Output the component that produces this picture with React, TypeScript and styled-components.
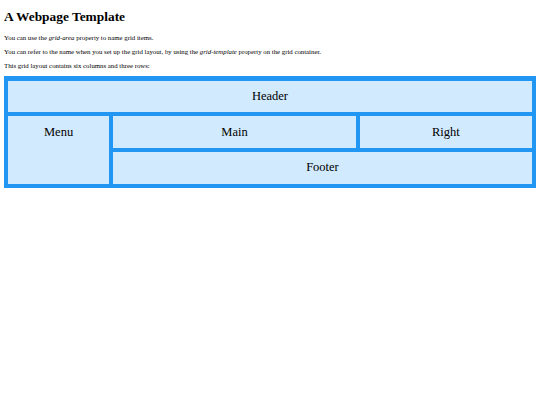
import React from "react";
import styled, { createGlobalStyle } from "styled-components";

const GlobalStyle = createGlobalStyle`
  html, body { background: #ffffff; }
  body {
    margin: 4px;
    font-family: "Liberation Serif", "Times New Roman", serif;
    color: #000000;
  }
`;

const Title = styled.h1`
  font-family: "Liberation Serif", "Times New Roman", serif;
  font-size: 13.4px;
  font-weight: bold;
  margin: 5.3px 0 8.7px;
`;

const Para = styled.p`
  font-family: "Liberation Serif", "Times New Roman", serif;
  font-size: 6.8px;
  margin: 6.8px 0;
`;

const Grid = styled.div`
  display: grid;
  grid-template-areas:
    "header header header header header header"
    "menu main main main right right"
    "menu footer footer footer footer footer";
  grid-template-columns: 101fr 78.3fr 78.3fr 78.3fr 84fr 84fr;
  gap: 4.2px;
  padding: 4.2px;
  background-color: #2196f3;
  margin-top: 7.8px;
`;

const Item = styled.div<{ $area: string }>`
  grid-area: ${(p) => p.$area};
  background-color: rgba(255, 255, 255, 0.8);
  text-align: center;
  padding: 8.3px 0;
  font-family: "Liberation Serif", "Times New Roman", serif;
  font-size: 12.5px;
`;

export default function App() {
  return (
    <>
      <GlobalStyle />
      <Title>A Webpage Template</Title>
      <Para>
        You can use the <em>grid-area</em> property to name grid items.
      </Para>
      <Para>
        You can refer to the name when you set up the grid layout, by using the{" "}
        <em>grid-template</em> property on the grid container.
      </Para>
      <Para>This grid layout contains six columns and three rows:</Para>
      <Grid>
        <Item $area="header">Header</Item>
        <Item $area="menu">Menu</Item>
        <Item $area="main">Main</Item>
        <Item $area="right">Right</Item>
        <Item $area="footer">Footer</Item>
      </Grid>
    </>
  );
}
